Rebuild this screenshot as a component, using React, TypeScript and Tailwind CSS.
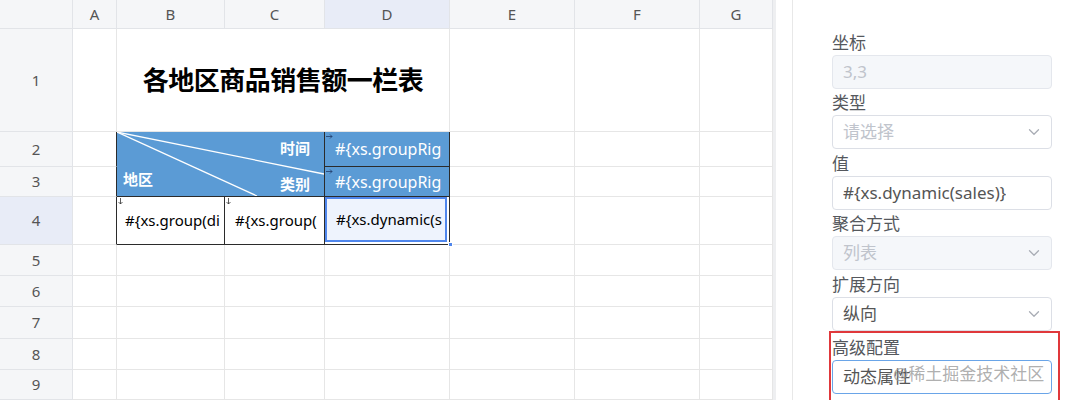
import { ChevronDown } from "lucide-react";

const font = { fontFamily: '"Noto Sans", "Noto Sans CJK SC", sans-serif' };

const cols = ["A", "B", "C", "D", "E", "F", "G"];

function RightArrow() {
  return (
    <svg width="7" height="5" viewBox="0 0 7 5" className="absolute left-[1px] top-[2px]">
      <path d="M0 2.5h6M4 0.5l2 2-2 2" stroke="#1f3a68" strokeWidth="0.8" fill="none" />
    </svg>
  );
}

function DownArrow() {
  return (
    <svg width="5" height="7" viewBox="0 0 5 7" className="absolute left-[1px] top-[1px]">
      <path d="M2.5 0v6M0.5 4l2 2 2-2" stroke="#333" strokeWidth="0.8" fill="none" />
    </svg>
  );
}

function Sheet() {
  const hdr = "bg-[#f5f6f8] border-r border-b border-[#e2e4e8] flex items-center justify-center text-[15px] text-[#555]";
  const cell = "border-r border-b border-[#e6e6e6]";
  const dark = "border-[#2b2b2b]";
  return (
    <div
      className="grid w-[773px] h-[400px] overflow-hidden bg-white"
      style={{
        ...font,
        gridTemplateColumns: "73px 44px 108px 100px 125px 125px 125px 73px",
        gridTemplateRows: "29px 103px 35px 30px 48px 31px 31px 32px 31px 30px",
      }}
    >
      {/* header row */}
      <div className={hdr} />
      {cols.map((c) => (
        <div
          key={c}
          className={
            c === "D"
              ? "bg-[#e8ecf7] border-r border-b border-[#e2e4e8] flex items-center justify-center text-[15px] text-[#555]"
              : hdr
          }
        >
          {c}
        </div>
      ))}

      {/* row 1 */}
      <div className={hdr}>1</div>
      <div className={cell} />
      <div className="col-span-3 border-r border-b border-[#e6e6e6] flex items-center justify-center">
        <span className="text-[26px] font-bold text-black tracking-[-0.5px]">各地区商品销售额一栏表</span>
      </div>
      <div className={cell} />
      <div className={cell} />
      <div className={cell} />

      {/* row 2 */}
      <div className={hdr}>2</div>
      <div className="border-r border-b border-[#e6e6e6] border-r-[#2b2b2b]" />
      <div className={`col-span-2 row-span-2 relative bg-[#5b9bd5] border-r border-b ${dark} flex flex-col text-white text-[15px] font-semibold`}>
        <svg className="absolute inset-0" width="207" height="64" viewBox="0 0 207 64">
          <line x1="0" y1="0" x2="207" y2="42" stroke="white" strokeWidth="1.3" />
          <line x1="0" y1="0" x2="140" y2="64" stroke="white" strokeWidth="1.3" />
        </svg>
        <div className="h-[32px] flex items-center justify-end pr-[14px] leading-[22px]">时间</div>
        <div className="flex-1 flex justify-between items-start">
          <span className="pl-[6px] mt-[4px] leading-[22px]">地区</span>
          <span className="pr-[14px] mt-[9px] leading-[22px]">类别</span>
        </div>
      </div>
      <div className={`relative bg-[#5b9bd5] border-r border-b ${dark} flex items-center pl-[10px] text-white text-[16px] whitespace-nowrap overflow-hidden`}>
        <RightArrow />
        #{"{"}xs.groupRig
      </div>
      <div className={cell} />
      <div className={cell} />
      <div className={cell} />

      {/* row 3 */}
      <div className={hdr}>3</div>
      <div className="border-r border-b border-[#e6e6e6] border-r-[#2b2b2b]" />
      <div className={`relative bg-[#5b9bd5] border-r border-b ${dark} flex items-center pl-[10px] text-white text-[16px] whitespace-nowrap overflow-hidden`}>
        <RightArrow />
        #{"{"}xs.groupRig
      </div>
      <div className={cell} />
      <div className={cell} />
      <div className={cell} />

      {/* row 4 */}
      <div className="bg-[#e8ecf7] border-r border-b border-[#e2e4e8] flex items-center justify-center text-[15px] text-[#555]">4</div>
      <div className="border-r border-b border-[#e6e6e6] border-r-[#2b2b2b]" />
      <div className={`relative border-r border-b ${dark} flex items-center pl-[8px] text-[15px] text-black whitespace-nowrap overflow-hidden`}>
        <DownArrow />
        #{"{"}xs.group(di
      </div>
      <div className={`relative border-r border-b ${dark} flex items-center pl-[10px] text-[15px] text-black whitespace-nowrap overflow-hidden`}>
        <DownArrow />
        #{"{"}xs.group(
      </div>
      <div className={`relative border-r border-b ${dark} p-0`}>
        <div className="h-[45px] w-[122px] border-2 border-[#4f86ec] bg-[#eef3fd] flex items-center pl-[9px] text-[15px] text-black whitespace-nowrap overflow-hidden">
          #{"{"}xs.dynamic(s
        </div>
        <span className="absolute right-[-4px] bottom-[-3px] w-[5px] h-[5px] bg-[#4f86ec] border border-white" />
      </div>
      <div className={cell} />
      <div className={cell} />
      <div className={cell} />

      {/* rows 5-9 */}
      {[5, 6, 7, 8, 9].map((r) => (
        <div key={r} className="contents">
          <div className={hdr}>{r}</div>
          <div className={cell} />
          <div className={cell} />
          <div className={cell} />
          <div className={cell} />
          <div className={cell} />
          <div className={cell} />
          <div className={cell} />
        </div>
      ))}
    </div>
  );
}

function Label({ children }: { children: React.ReactNode }) {
  return <div className="h-[27px] flex items-center pt-[2px] text-[17px] text-[#55585d] leading-none">{children}</div>;
}

function Field({
  value,
  placeholder,
  disabled,
  select,
  focused,
}: {
  value?: string;
  placeholder?: string;
  disabled?: boolean;
  select?: boolean;
  focused?: boolean;
}) {
  const base = "h-[34px] w-[220px] rounded-[4px] border flex items-center justify-between pl-[10px] pr-[8px] text-[17px]";
  const cls = disabled
    ? `${base} bg-[#f5f7fa] border-[#e4e7ed] text-[#c0c4cc]`
    : focused
    ? `${base} bg-white border-[#6aa5e8] text-[#555]`
    : `${base} bg-white border-[#dcdfe6] text-[#555]`;
  return (
    <div className={cls}>
      <span className={value ? "whitespace-nowrap overflow-hidden" : "text-[#c0c4cc]"}>{value ?? placeholder}</span>
      {select && <ChevronDown size={18} strokeWidth={1.7} className="text-[#a9adb5] shrink-0" />}
    </div>
  );
}

function Sidebar() {
  return (
    <div className="flex-1 flex h-[400px]" style={font}>
      <div className="w-[3px] bg-[#eeeff1]" />
      <div className="w-[17px] bg-white border-r border-[#e8e8e8]" />
      <div className="flex-1 pl-[39px] pt-[28px] flex flex-col">
        <Label>坐标</Label>
        <Field value="3,3" disabled />
        <Label>类型</Label>
        <Field placeholder="请选择" select />
        <Label>值</Label>
        <Field value="#{xs.dynamic(sales)}" />
        <Label>聚合方式</Label>
        <Field value="列表" disabled select />
        <Label>扩展方向</Label>
        <Field value="纵向" select />
        <div className="relative -ml-[3px] w-[231px] border-2 border-b-0 border-[#e0383b] pl-[1px] h-[70px]">
          <Label>高级配置</Label>
          <Field value="动态属性" focused />
          <span className="absolute left-[62px] top-[28px] text-[17px] text-[#9a9a9a]/80 whitespace-nowrap pointer-events-none">
            @稀土掘金技术社区
          </span>
        </div>
      </div>
    </div>
  );
}

export default function App() {
  return (
    <div className="w-[1065px] h-[400px] flex overflow-hidden bg-white">
      <Sheet />
      <Sidebar />
    </div>
  );
}
